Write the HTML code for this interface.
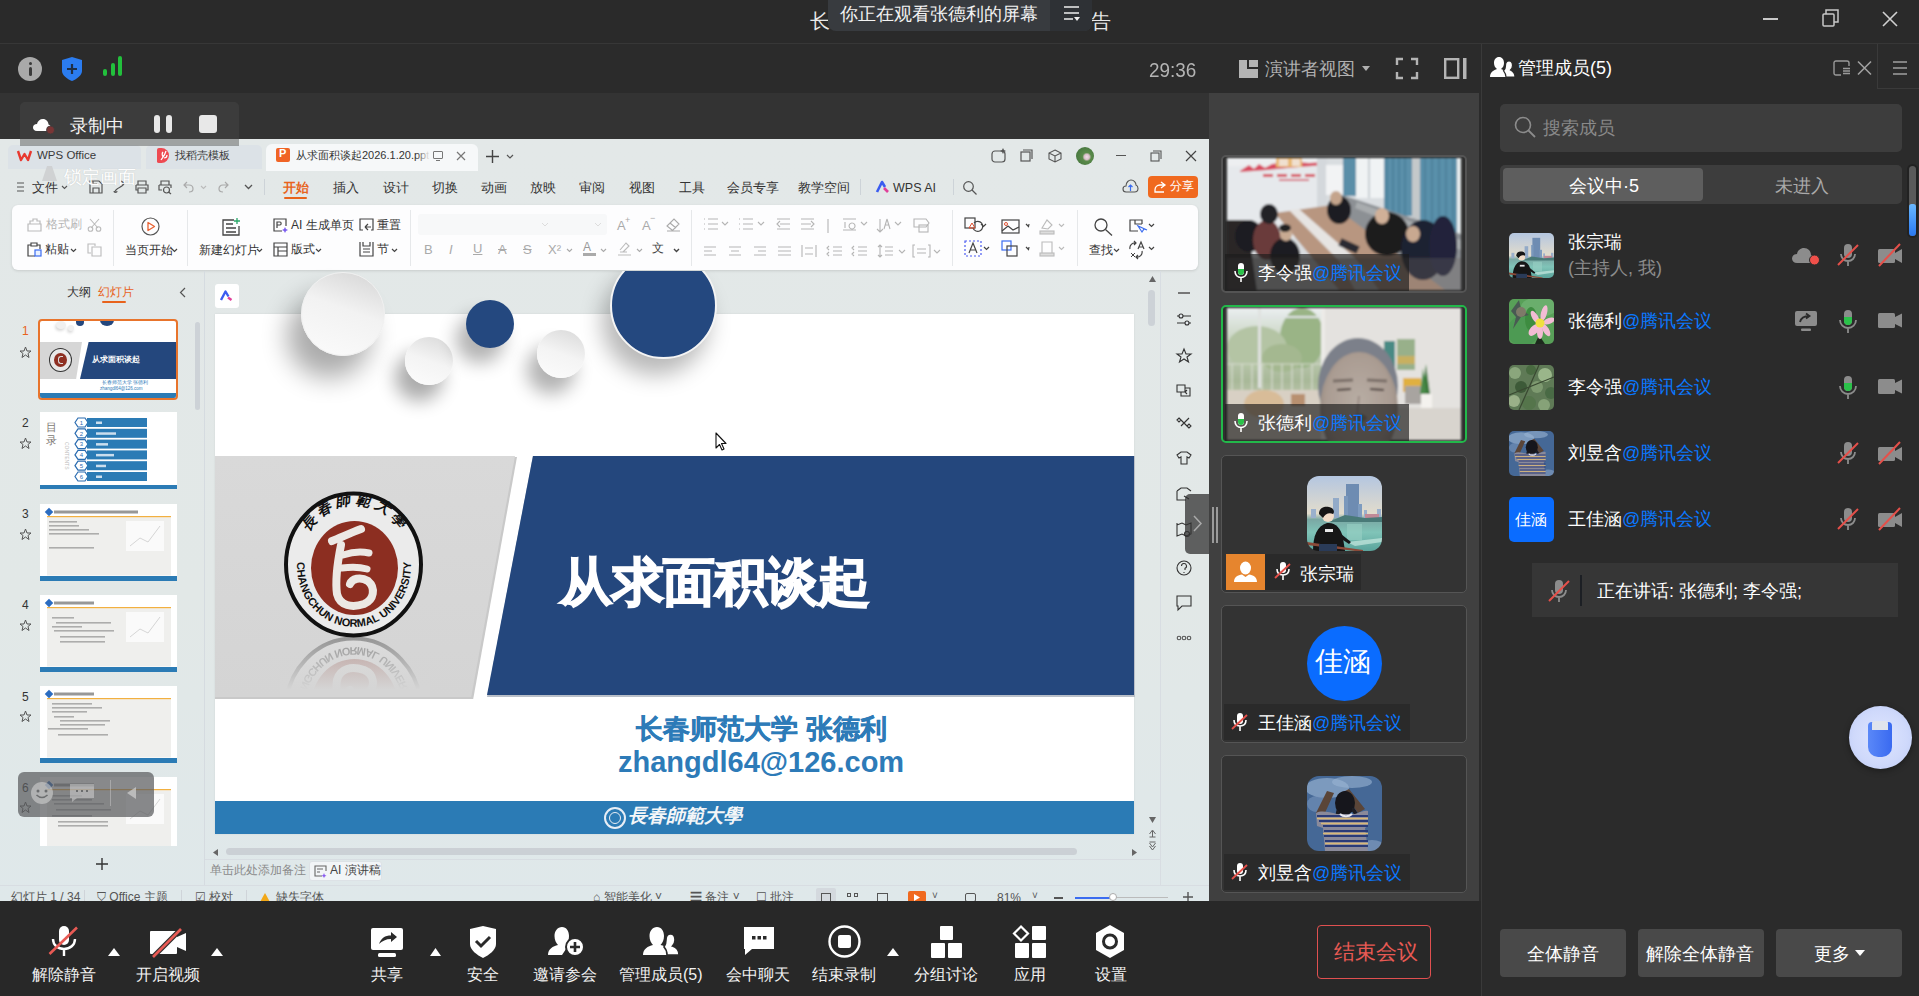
<!DOCTYPE html>
<html><head><meta charset="utf-8">
<style>
*{box-sizing:border-box;margin:0;padding:0}
html,body{width:1919px;height:996px;overflow:hidden;background:#2a2a2a;font-family:"Liberation Sans",sans-serif;color:#fff}
.a{position:absolute}
.t{position:absolute;white-space:nowrap;line-height:1}
svg{position:absolute;overflow:visible}
</style></head><body>
<svg width="0" height="0" style="position:absolute;left:0;top:0">
<defs>
<filter id="sblur"><feGaussianBlur stdDeviation="0.5"/></filter>
<linearGradient id="boySky" x1="0" y1="0" x2="0" y2="1"><stop offset="0" stop-color="#b4c6e0"/><stop offset="0.5" stop-color="#e2dccc"/><stop offset="0.58" stop-color="#7aa8a4"/><stop offset="0.75" stop-color="#80c4b8"/><stop offset="1" stop-color="#5aa49c"/></linearGradient>
<symbol id="boyAv" viewBox="0 0 75 75">
 <g filter="url(#sblur)">
 <rect width="75" height="75" fill="url(#boySky)"/>
 <rect x="39" y="8" width="13" height="34" fill="#6e8cb2"/><rect x="37" y="20" width="4" height="22" fill="#7a98bc"/><rect x="51" y="28" width="4" height="14" fill="#7e9cc0"/>
 <rect x="26" y="22" width="6" height="20" fill="#92aac8"/><rect x="4" y="33" width="5" height="9" fill="#9ab0cc"/><rect x="57" y="34" width="3" height="8" fill="#9ab0cc"/><rect x="70" y="33" width="4" height="9" fill="#9ab0cc"/>
 <rect x="58" y="38" width="14" height="6" fill="#c08a98"/>
 <path d="M26 44L38 39L58 42L75 41V46H22Z" fill="#4a7a78"/>
 <path d="M40 48H55V64H40Z" fill="#9ad0c4" opacity="0.6"/>
 <path d="M40 66L75 62V66L48 70Z" fill="#c8e8e0" opacity="0.7"/>
 <path d="M6 75C6 60 10 50 20 47C28 46 34 52 36 62L38 75Z" fill="#151518"/>
 <path d="M34 58L44 66L42 68L33 62Z" fill="#151518"/>
 <path d="M18 53h8v3h-8z" fill="#e8e8e8"/>
 <ellipse cx="21" cy="40" rx="6" ry="6" fill="#f2dcc8"/>
 <path d="M12 38C12 32 17 30 22 31C27 32 28 36 26 38C22 36 18 38 16 42Z" fill="#141416"/>
 <path d="M0 66L56 74V76L0 69Z" fill="#8a4a38"/>
 <rect x="12" y="68" width="18" height="7" fill="#2a3a58"/>
 </g>
</symbol>
<symbol id="girlAv" viewBox="0 0 75 75">
 <g filter="url(#sblur)">
 <rect width="75" height="75" fill="#456896"/>
 <ellipse cx="20" cy="12" rx="22" ry="10" fill="#8aa6c8" opacity="0.8"/>
 <ellipse cx="45" cy="6" rx="20" ry="6" fill="#9ab4d2" opacity="0.6"/>
 <ellipse cx="10" cy="28" rx="10" ry="8" fill="#7a96bc" opacity="0.6"/>
 <ellipse cx="65" cy="70" rx="12" ry="6" fill="#8aa4c4" opacity="0.6"/>
 <path d="M9 37L20 15L27 17L17 39Z" fill="#5a4438"/>
 <path d="M58 33L42 13L36 16L51 37Z" fill="#5a4438"/>
 <ellipse cx="38" cy="27" rx="10" ry="12" fill="#16161c"/>
 <path d="M30 32L26 50L30 50L33 36Z" fill="#1a1a20"/><path d="M46 30L54 42L51 44L44 34Z" fill="#1a1a20"/>
 <path d="M9 37C14 34 22 36 30 38L48 38C54 36 58 34 61 35L61 50L58 52L61 75H18L16 52L10 50Z" fill="#8a8a9a"/>
 <path d="M10 40H61M12 45H61M16 50H61M17 55H61M17 60H61M18 65H61M18 70H61" stroke="#2a3a78" stroke-width="2"/>
 <path d="M10 42.5H61M14 47.5H61M16 57.5H61M18 67.5H61" stroke="#d8b878" stroke-width="1.4"/>
 <path d="M33 38C36 41 42 41 45 38" stroke="#e8e8f0" stroke-width="2" fill="none"/>
 </g>
</symbol>
<symbol id="lilyAv" viewBox="0 0 45 45">
 <g filter="url(#sblur)">
 <rect width="45" height="45" fill="#58a058"/>
 <ellipse cx="14" cy="32" rx="16" ry="15" fill="#4e9a52"/>
 <ellipse cx="30" cy="8" rx="18" ry="10" fill="#6aae6c"/>
 <ellipse cx="22" cy="20" rx="6" ry="12" fill="#3e8c40"/>
 <path d="M2 12L10 1L12 10L20 16L12 18L4 30L7 18Z" fill="#4a5a52"/>
 <ellipse cx="12" cy="13" rx="5" ry="5" fill="#7e7a68"/>
 <path d="M30 36L36 45H26Z" fill="#1e2a1e"/>
 <g fill="#f2bcd4"><ellipse cx="26" cy="18" rx="3" ry="7" transform="rotate(-30 26 18)"/><ellipse cx="35" cy="14" rx="3" ry="8" transform="rotate(15 35 14)"/><ellipse cx="40" cy="22" rx="3" ry="6" transform="rotate(70 40 22)"/><ellipse cx="25" cy="31" rx="4" ry="7" transform="rotate(40 25 31)"/><ellipse cx="37" cy="31" rx="3" ry="7" transform="rotate(-30 37 31)"/><ellipse cx="31" cy="33" rx="3" ry="7"/></g>
 <circle cx="31" cy="24" r="4.5" fill="#f0e040"/>
 </g>
</symbol>
</defs></svg>

<!-- title bar -->
<div class="a" style="left:0;top:0;width:1919px;height:44px;background:#2a2a2a"></div>
<div class="a" style="left:0;top:43px;width:1919px;height:2px;background:#373737"></div>
<div class="t" style="left:810px;top:11px;font-size:20px;color:#e8e8e8">长</div>
<div class="t" style="left:1091px;top:11px;font-size:20px;color:#e8e8e8">告</div>
<div class="a" style="left:828px;top:0;width:264px;height:31px;background:#383b3f;border-radius:0 0 8px 8px"></div>
<div class="a" style="left:1050px;top:0;width:42px;height:31px;background:#2e3135;border-radius:0 0 8px 0"></div>
<div class="t" style="left:840px;top:5px;font-size:18px;color:#f2f2f2">你正在观看张德利的屏幕</div>

<!-- toolbar -->
<div class="a" style="left:0;top:44px;width:1919px;height:49px;background:#2b2b2b"></div>
<div class="t" style="left:1149px;top:59.5px;font-size:20.5px;color:#b4b4b4;transform:scaleX(0.92);transform-origin:0 0">29:36</div>
<div class="t" style="left:1265px;top:60px;font-size:18px;color:#b0b0b0">演讲者视图</div>

<!-- left dark strip below toolbar -->
<div class="a" style="left:0;top:93px;width:1209px;height:46px;background:#333"></div>
<!-- video column -->
<div class="a" style="left:1209px;top:93px;width:270px;height:808px;background:#404040"></div>
<div class="a" style="left:1479px;top:93px;width:2px;height:808px;background:#2b2b2b"></div>
<div class="a" style="left:1481px;top:44px;width:1px;height:952px;background:#3a3a3a"></div>
<!-- right panel -->
<div class="a" style="left:1482px;top:44px;width:437px;height:952px;background:#2b2b2b"></div>

<!-- WPS window -->
<div class="a" style="left:0;top:0;width:1209px;height:901px;overflow:hidden">
<div class="a" style="left:0;top:139px;width:1209px;height:762px;background:linear-gradient(180deg,#e3e8e8 0%,#e2e8e7 60%,#dfe8ea 100%)"></div>
<!-- tabs -->
<div class="a" style="left:8px;top:145px;width:133px;height:24px;background:#dce2e7;border-radius:5px 5px 0 0"></div>
<div class="a" style="left:146px;top:145px;width:116px;height:24px;background:#dce2e7;border-radius:5px 5px 0 0"></div>
<div class="a" style="left:266px;top:144px;width:212px;height:27px;background:#f6f8f9;border-radius:6px 6px 0 0"></div>
<svg style="left:17px;top:150px" width="15" height="11" viewBox="0 0 15 11"><path d="M1 1 L4 10 L7.5 4 L11 10 L14 1" fill="none" stroke="#e8382f" stroke-width="2.4" stroke-linejoin="round"/></svg>
<div class="t" style="left:37px;top:150px;font-size:11.5px;color:#3a3a3a">WPS Office</div>
<div class="a" style="left:157px;top:148px;width:12px;height:15px;background:#ee4a52;border-radius:2px 8px 8px 2px"></div><svg style="left:158px;top:150px" width="10" height="11"><path d="M3 10C5 7 7 5 8 1M5 7C4 5 4 3 5 2M6 8C8 8 9 7 9 5" fill="none" stroke="#fff" stroke-width="1.2"/></svg>
<div class="t" style="left:175px;top:150px;font-size:11px;color:#3a3a3a">找稻壳模板</div>
<div class="a" style="left:276px;top:148px;width:14px;height:14px;background:#f06425;border-radius:2px"></div>
<div class="t" style="left:279px;top:148px;font-size:11px;font-weight:bold;color:#fff">P</div>
<div class="t" style="left:296px;top:150px;font-size:11px;color:#333">从求面积谈起2026.1.20.ppt</div>
<div class="a" style="left:416px;top:146px;width:14px;height:20px;background:linear-gradient(90deg,rgba(246,248,249,0),#f6f8f9)"></div>
<div class="a" style="left:433px;top:151px;width:10px;height:8px;border:1.2px solid #777;border-radius:1px"></div>
<div class="a" style="left:436px;top:160px;width:4px;height:1px;background:#777"></div>
<svg style="left:456px;top:151px" width="10" height="10"><path d="M1 1L9 9M9 1L1 9" stroke="#777" stroke-width="1.2"/></svg>
<svg style="left:486px;top:150px" width="13" height="13"><path d="M6.5 0V13M0 6.5H13" stroke="#444" stroke-width="1.4"/></svg>
<svg style="left:506px;top:154px" width="8" height="5"><path d="M1 1L4 4L7 1" fill="none" stroke="#555" stroke-width="1.2"/></svg>
<!-- window controls -->
<svg style="left:991px;top:148px" width="16" height="15"><rect x="1" y="3" width="13" height="11" rx="3" fill="none" stroke="#555" stroke-width="1.2"/><path d="M12 0l1 2 2 1-2 1-1 2-1-2-2-1 2-1z" fill="#555"/></svg>
<svg style="left:1020px;top:149px" width="13" height="13"><rect x="1" y="3" width="9" height="9" fill="none" stroke="#555" stroke-width="1.2"/><path d="M3 1H12V10" fill="none" stroke="#555" stroke-width="1.2"/></svg>
<svg style="left:1048px;top:149px" width="14" height="14"><path d="M7 1L13 4V10L7 13L1 10V4Z M1 4L7 7L13 4 M7 7V13" fill="none" stroke="#555" stroke-width="1.1"/></svg>
<div class="a" style="left:1076px;top:147px;width:18px;height:18px;border-radius:50%;background:radial-gradient(circle at 60% 55%,#f0e0e8 0,#d9c0c8 18%,#5a8a4a 30%,#3e6e3a 100%)"></div>
<div class="a" style="left:1116px;top:155px;width:10px;height:1.3px;background:#555"></div>
<svg style="left:1150px;top:150px" width="12" height="12"><rect x="1" y="3" width="8" height="8" fill="none" stroke="#555" stroke-width="1.1"/><path d="M3 1H11V9" fill="none" stroke="#555" stroke-width="1.1"/></svg>
<svg style="left:1186px;top:151px" width="10" height="10"><path d="M0 0L10 10M10 0L0 10" stroke="#444" stroke-width="1.2"/></svg>

<!-- menu row -->
<svg style="left:17px;top:182px" width="7" height="10"><path d="M0 1H7M0 5H7M0 9H7" stroke="#555" stroke-width="1.1"/></svg>
<div class="t" style="left:32px;top:182px;font-size:12.5px;color:#333">文件</div>
<svg style="left:61px;top:185px" width="7" height="5"><path d="M1 1L3.5 3.5L6 1" fill="none" stroke="#555" stroke-width="1.1"/></svg>
<svg style="left:89px;top:180px" width="14" height="14"><path d="M1 1H10L13 4V13H1Z M4 13V8H10V13 M4 1V4H8" fill="none" stroke="#555" stroke-width="1.2"/></svg>
<svg style="left:113px;top:180px" width="13" height="14"><path d="M2 12 C2 8 11 7 11 3 M8 1 L11 3 L9 6 M1 11 a1.5 1.5 0 1 0 3 0" fill="none" stroke="#555" stroke-width="1.2"/></svg>
<svg style="left:135px;top:180px" width="14" height="14"><path d="M3 5V1H11V5 M1 5H13V10H11 M3 10H1V5 M3 8H11V13H3Z" fill="none" stroke="#555" stroke-width="1.2"/></svg>
<svg style="left:158px;top:180px" width="14" height="14"><path d="M3 5V1H11V5 M1 5H13V8 M1 5V10H4" fill="none" stroke="#555" stroke-width="1.2"/><circle cx="8.5" cy="10" r="3" fill="none" stroke="#555" stroke-width="1.2"/><path d="M10.5 12L13 14" stroke="#555" stroke-width="1.2"/></svg>
<svg style="left:183px;top:181px" width="11" height="12"><path d="M4 1L1 4L4 7 M1 4H6C9 4 10 6 10 8C10 10 8 11 6 11" fill="none" stroke="#aaa" stroke-width="1.2"/></svg>
<svg style="left:200px;top:185px" width="7" height="5"><path d="M1 1L3.5 3.5L6 1" fill="none" stroke="#bbb" stroke-width="1.1"/></svg>
<svg style="left:218px;top:181px" width="11" height="12"><path d="M7 1L10 4L7 7 M10 4H5C2 4 1 6 1 8C1 10 3 11 5 11" fill="none" stroke="#aaa" stroke-width="1.2"/></svg>
<svg style="left:244px;top:184px" width="9" height="6"><path d="M1 1L4.5 4.5L8 1" fill="none" stroke="#555" stroke-width="1.3"/></svg>
<div class="a" style="left:264px;top:179px;width:1px;height:16px;background:#cdd3d8"></div>
<div class="t" style="left:283px;top:182px;font-size:12.5px;color:#e8631c;font-weight:bold">开始</div>
<div class="a" style="left:284px;top:197px;width:23px;height:2px;background:#e8631c;border-radius:1px"></div>
<div class="t" style="left:333px;top:182px;font-size:12.5px;color:#333">插入</div>
<div class="t" style="left:383px;top:182px;font-size:12.5px;color:#333">设计</div>
<div class="t" style="left:432px;top:182px;font-size:12.5px;color:#333">切换</div>
<div class="t" style="left:481px;top:182px;font-size:12.5px;color:#333">动画</div>
<div class="t" style="left:530px;top:182px;font-size:12.5px;color:#333">放映</div>
<div class="t" style="left:579px;top:182px;font-size:12.5px;color:#333">审阅</div>
<div class="t" style="left:629px;top:182px;font-size:12.5px;color:#333">视图</div>
<div class="t" style="left:679px;top:182px;font-size:12.5px;color:#333">工具</div>
<div class="t" style="left:727px;top:182px;font-size:12.5px;color:#333">会员专享</div>
<div class="t" style="left:798px;top:182px;font-size:12.5px;color:#333">教学空间</div>
<div class="a" style="left:860px;top:179px;width:1px;height:16px;background:#cdd3d8"></div>
<svg style="left:876px;top:181px" width="15" height="12"><path d="M1 11L6 1L9 6" fill="none" stroke="#3b5cf0" stroke-width="2.6" stroke-linejoin="round"/><path d="M8 7L12 11" stroke="#e0409a" stroke-width="2.6"/></svg>
<div class="t" style="left:893px;top:182px;font-size:12.5px;color:#333">WPS AI</div>
<div class="a" style="left:953px;top:179px;width:1px;height:16px;background:#cdd3d8"></div>
<svg style="left:963px;top:181px" width="14" height="14"><circle cx="5.5" cy="5.5" r="4.8" fill="none" stroke="#555" stroke-width="1.2"/><path d="M9 9L13.5 13.5" stroke="#555" stroke-width="1.2"/></svg>
<svg style="left:1122px;top:179px" width="17" height="15"><path d="M4 13C1.5 13 1 11 1 10C1 8 2.5 7 4 7C4 3 7 1 9 1C12 1 14 3.5 14 6C15.5 6.5 16 8 16 9.5C16 11.5 14.5 13 12.5 13Z" fill="none" stroke="#555" stroke-width="1.1"/><path d="M8.5 12V6M6.5 8L8.5 6L10.5 8" fill="none" stroke="#3b6cf0" stroke-width="1.2"/></svg>
<div class="a" style="left:1148px;top:176px;width:50px;height:22px;background:#f0691f;border-radius:4px"></div>
<svg style="left:1154px;top:181px" width="12" height="12"><path d="M7 1L11 4L7 7 M11 4H6C3 4 1 6 1 9V11H10" fill="none" stroke="#fff" stroke-width="1.3"/></svg>
<div class="t" style="left:1170px;top:180px;font-size:12px;color:#fff">分享</div>

<!-- ribbon card -->
<div class="a" style="left:12px;top:205px;width:1186px;height:65px;background:#fdfdfe;border-radius:6px;box-shadow:0 1px 3px rgba(0,0,0,0.12)"></div>
<!-- ribbon content -->
<svg style="left:27px;top:218px" width="15" height="14"><path d="M3 6V3H6V1H10V3H13V6 M1 6H14V13H1Z" fill="none" stroke="#bbb" stroke-width="1.2"/></svg>
<div class="t" style="left:46px;top:219px;font-size:11.5px;color:#b5b5b5">格式刷</div>
<svg style="left:87px;top:218px" width="15" height="14"><path d="M3 1L11 10M12 1L4 10" fill="none" stroke="#bbb" stroke-width="1.1"/><circle cx="3.5" cy="11" r="2.3" fill="none" stroke="#bbb" stroke-width="1.1"/><circle cx="11.5" cy="11" r="2.3" fill="none" stroke="#bbb" stroke-width="1.1"/></svg>
<svg style="left:27px;top:242px" width="15" height="15"><path d="M4 3H1V14H8 M10 3H13V7 M4 1H10V4H4Z" fill="none" stroke="#444" stroke-width="1.2"/><rect x="8" y="8" width="6" height="6" fill="#e8f0ff" stroke="#3b6cf0" stroke-width="1.2"/></svg>
<div class="t" style="left:45px;top:243px;font-size:12px;color:#333">粘贴</div>
<svg style="left:70px;top:248px" width="7" height="5"><path d="M1 1L3.5 3.5L6 1" fill="none" stroke="#444" stroke-width="1.2"/></svg>
<svg style="left:87px;top:243px" width="15" height="14"><path d="M4 10H1V1H8V3 M5 4H14V13H5Z" fill="none" stroke="#bbb" stroke-width="1.1"/></svg>
<div class="a" style="left:113px;top:210px;width:1px;height:56px;background:#e6e8ea"></div>
<svg style="left:141px;top:217px" width="19" height="19"><circle cx="9.5" cy="9.5" r="8.5" fill="none" stroke="#555" stroke-width="1.2"/><path d="M7 5.5V13.5L13.5 9.5Z" fill="none" stroke="#e86030" stroke-width="1.3" stroke-linejoin="round"/></svg>
<div class="t" style="left:125px;top:244px;font-size:12px;color:#333">当页开始</div>
<svg style="left:171px;top:248px" width="7" height="5"><path d="M1 1L3.5 3.5L6 1" fill="none" stroke="#444" stroke-width="1.2"/></svg>
<div class="a" style="left:187px;top:210px;width:1px;height:56px;background:#e6e8ea"></div>
<svg style="left:222px;top:217px" width="19" height="19"><path d="M12 3H1V18H17V9 M4 7H11M4 11H14M4 15H14" fill="none" stroke="#444" stroke-width="1.3"/><path d="M15 1V7M12 4H18" stroke="#2aa86a" stroke-width="1.3"/></svg>
<div class="t" style="left:199px;top:244px;font-size:12px;color:#333">新建幻灯片</div>
<svg style="left:256px;top:248px" width="7" height="5"><path d="M1 1L3.5 3.5L6 1" fill="none" stroke="#444" stroke-width="1.2"/></svg>
<svg style="left:273px;top:218px" width="15" height="15"><path d="M9 13H1V1H13V8" fill="none" stroke="#444" stroke-width="1.2"/><path d="M4 10V4H7C8.5 4 8.5 7 7 7H4" fill="none" stroke="#444" stroke-width="1.2"/><path d="M12 9L13 11L15 12L13 13L12 15L11 13L9 12L11 11Z" fill="#7b5cf0"/></svg>
<div class="t" style="left:291px;top:219px;font-size:12px;color:#333">AI 生成单页</div>
<svg style="left:273px;top:242px" width="15" height="15"><path d="M1 1H14V14H1Z M1 5H14 M5 5V14 M5 9H14" fill="none" stroke="#444" stroke-width="1.2"/></svg>
<div class="t" style="left:291px;top:243px;font-size:12px;color:#333">版式</div>
<svg style="left:315px;top:248px" width="7" height="5"><path d="M1 1L3.5 3.5L6 1" fill="none" stroke="#444" stroke-width="1.2"/></svg>
<svg style="left:359px;top:218px" width="15" height="15"><path d="M4 12H1V1H14V12H12 M6 9L9 6 M6 9L9 12 M6 9H12" fill="none" stroke="#444" stroke-width="1.2"/></svg>
<div class="t" style="left:377px;top:219px;font-size:12px;color:#333">重置</div>
<svg style="left:359px;top:241px" width="15" height="16"><path d="M1 1V15H14V1 M4 1V5H11V1 M4 8H11M4 11H11" fill="none" stroke="#444" stroke-width="1.2"/></svg>
<div class="t" style="left:377px;top:243px;font-size:12px;color:#333">节</div>
<svg style="left:391px;top:248px" width="7" height="5"><path d="M1 1L3.5 3.5L6 1" fill="none" stroke="#444" stroke-width="1.2"/></svg>
<div class="a" style="left:410px;top:210px;width:1px;height:56px;background:#e6e8ea"></div>
<div class="a" style="left:418px;top:214px;width:189px;height:21px;background:#f7f8f9;border-radius:3px"></div>
<svg style="left:541px;top:222px" width="8" height="5"><path d="M1 1L4 4L7 1" fill="none" stroke="#ddd" stroke-width="1"/></svg>
<svg style="left:594px;top:222px" width="8" height="5"><path d="M1 1L4 4L7 1" fill="none" stroke="#ddd" stroke-width="1"/></svg>
<div class="t" style="left:617px;top:219px;font-size:13px;color:#aaa">A</div><div class="t" style="left:625px;top:216px;font-size:9px;color:#aaa">+</div>
<div class="t" style="left:642px;top:219px;font-size:13px;color:#aaa">A</div><div class="t" style="left:650px;top:214px;font-size:9px;color:#aaa">−</div>
<svg style="left:666px;top:218px" width="15" height="14"><path d="M6 12L1 8L8 1L13 6L7 12Z M4 5L10 10 M1 13H14" fill="none" stroke="#aaa" stroke-width="1.1"/></svg>
<div class="t" style="left:424px;top:243px;font-size:13px;color:#aaa">B</div>
<div class="t" style="left:449px;top:243px;font-size:13px;color:#aaa;font-style:italic">I</div>
<div class="t" style="left:473px;top:242px;font-size:13px;color:#aaa;text-decoration:underline">U</div>
<div class="t" style="left:498px;top:243px;font-size:13px;color:#aaa;text-decoration:line-through">A</div>
<div class="t" style="left:523px;top:243px;font-size:13px;color:#aaa;text-decoration:line-through">S</div>
<div class="t" style="left:548px;top:243px;font-size:13px;color:#aaa">X²</div>
<svg style="left:566px;top:248px" width="7" height="5"><path d="M1 1L3.5 3.5L6 1" fill="none" stroke="#aaa" stroke-width="1.1"/></svg>
<div class="t" style="left:583px;top:241px;font-size:12px;color:#999">A</div>
<div class="a" style="left:583px;top:253px;width:13px;height:3px;background:#aaa"></div>
<svg style="left:600px;top:248px" width="7" height="5"><path d="M1 1L3.5 3.5L6 1" fill="none" stroke="#aaa" stroke-width="1.1"/></svg>
<svg style="left:618px;top:241px" width="13" height="15"><path d="M2 9L8 2L11 5L5 11 M2 11H9" fill="none" stroke="#bbb" stroke-width="1.1"/><rect x="0" y="13" width="13" height="2" fill="#ddd"/></svg>
<svg style="left:636px;top:248px" width="7" height="5"><path d="M1 1L3.5 3.5L6 1" fill="none" stroke="#aaa" stroke-width="1.1"/></svg>
<div class="t" style="left:652px;top:242px;font-size:12px;color:#444">文</div>
<svg style="left:673px;top:248px" width="7" height="5"><path d="M1 1L3.5 3.5L6 1" fill="none" stroke="#444" stroke-width="1.4"/></svg>
<div class="a" style="left:691px;top:210px;width:1px;height:56px;background:#e6e8ea"></div>
<!-- paragraph group (grey icons) -->
<svg style="left:704px;top:218px" width="240" height="42">
<g fill="none" stroke="#b5b5b5" stroke-width="1.1">
<path d="M0 1h1M0 6h1M0 11h1M4 1h10M4 6h10M4 11h10"/><path d="M18 4l3 3 3-3"/>
<path d="M35 1h1M35 6h1M35 11h1M39 1h10M39 6h10M39 11h10"/><path d="M54 4l3 3 3-3"/>
<path d="M73 1h13M76 6h10M73 11h13M76 3l-3 3 3 3"/>
<path d="M97 1h13M97 6h10M97 11h13M107 3l3 3-3 3"/>
<path d="M124 1v14"/>
<path d="M139 1h13M139 12h13M141 4v6M148 5a3 3 0 1 0 0.1 0"/><path d="M157 4l3 3 3-3"/>
<path d="M176 1v13M173 11l3 3 3-3M183 1l-3 10M183 1l3 10M181 7h4"/><path d="M191 4l3 3 3-3"/>
<path d="M210 1h12l3 4-3 4h-12z"/><rect x="215" y="7" width="9" height="7"/>
<path d="M0 29h12M0 33h8M0 37h12"/>
<path d="M25 29h12M27 33h8M25 37h12"/>
<path d="M50 29h12M54 33h8M50 37h12"/>
<path d="M74 29h13M74 33h13M74 37h13"/>
<path d="M98 27v12M112 27v12M101 30h8M101 36h8"/>
<path d="M125 28l-2 2 2 2M125 38l-2-2 2-2M129 29h9M129 33h9M129 37h9"/>
<path d="M150 28l-2 2 2 2M150 38l-2-2 2-2M154 29h9M154 33h9M154 37h9"/>
<path d="M176 27v12M174 29l2-2 2 2M174 37l2 2 2-2M181 29h8M181 33h8M181 37h8"/><path d="M195 32l3 3 3-3"/>
<path d="M211 27h-2v12h2M224 27h2v12h-2M213 31h9M213 35h9"/><path d="M230 32l3 3 3-3"/>
</g></svg>
<div class="a" style="left:952px;top:210px;width:1px;height:56px;background:#e6e8ea"></div>
<svg style="left:964px;top:217px" width="105" height="42">
<g fill="none" stroke="#444" stroke-width="1.2">
<rect x="1" y="1" width="10" height="10"/><path d="M9 11a5 5 0 1 0 1-5"/><path d="M17 7l2.5 2.5L22 7"/>
<rect x="38" y="3" width="17" height="13"/><path d="M38 14l6-5 5 4 6-3"/><path d="M62 7l2.5 2.5L65 7"/>
</g>
<path d="M5 11l3-5 3 5z" fill="none" stroke="#e05030" stroke-width="1"/>
<circle cx="42" cy="7" r="1.5" fill="none" stroke="#e05030"/>
<g fill="none" stroke="#bbb" stroke-width="1.1"><path d="M78 11l5-8 5 5-4 4z"/><rect x="76" y="14" width="14" height="3" fill="#ddd"/><path d="M95 7l2.5 2.5L100 7"/></g>
<g fill="none" stroke="#444" stroke-width="1.2"><rect x="1" y="24" width="16" height="15" stroke-dasharray="2 2" stroke="#4a5af0"/><path d="M5 36l4-10 4 10M6.5 33h5"/><path d="M20 30l2.5 2.5L25 30"/>
<rect x="38" y="24" width="9" height="9" stroke="#3b6cf0"/><rect x="43" y="29" width="10" height="10"/><path d="M62 30l2.5 2.5L65 30"/></g>
<g fill="none" stroke="#bbb" stroke-width="1.1"><path d="M78 36V25h10v11"/><rect x="76" y="36" width="14" height="3" fill="#ddd"/><path d="M95 30l2.5 2.5L100 30"/></g>
</svg>
<div class="a" style="left:1077px;top:210px;width:1px;height:56px;background:#e6e8ea"></div>
<svg style="left:1094px;top:218px" width="19" height="18"><circle cx="7" cy="7" r="6" fill="none" stroke="#444" stroke-width="1.3"/><path d="M11.5 11.5L18 17.5" stroke="#444" stroke-width="1.3"/></svg>
<div class="t" style="left:1089px;top:244px;font-size:12px;color:#333">查找</div>
<svg style="left:1113px;top:248px" width="7" height="5"><path d="M1 1L3.5 3.5L6 1" fill="none" stroke="#444" stroke-width="1.2"/></svg>
<svg style="left:1129px;top:218px" width="28" height="40"><g fill="none" stroke="#444" stroke-width="1.2"><path d="M9 13H1V2H13V6 M6 2V6H13"/><path d="M9 8l4 6 2-3 3 1z" stroke="#3b6cf0"/><path d="M20 6l2.5 2.5L25 6"/><path d="M1 31a5 5 0 0 1 6-6M13 33a5 5 0 0 1-6 6M5 23l2 2-2 2M9 37l-2 2 2 2"/><path d="M9 31l3-7 3 7M10 29h4"/><path d="M2 35l4 4M6 35l-4 4" stroke-width="1"/><path d="M20 29l2.5 2.5L25 29"/></g></svg>
<!-- left pane -->
<div class="a" style="left:204px;top:271px;width:1px;height:614px;background:#d5dbe0"></div>
<div class="t" style="left:67px;top:286px;font-size:12px;color:#333">大纲</div>
<div class="t" style="left:98px;top:286px;font-size:12px;color:#e8631c">幻灯片</div>
<div class="a" style="left:102px;top:301px;width:24px;height:2px;background:#e8631c;border-radius:1px"></div>
<svg style="left:179px;top:287px" width="7" height="11"><path d="M6 1L1.5 5.5L6 10" fill="none" stroke="#555" stroke-width="1.2"/></svg>
<div class="a" style="left:195px;top:322px;width:5px;height:88px;background:#cdd2d7;border-radius:3px"></div>
<!-- slide numbers -->
<div class="t" style="left:22px;top:325px;font-size:12px;color:#e8631c">1</div>
<div class="t" style="left:22px;top:417px;font-size:12px;color:#333">2</div>
<div class="t" style="left:22px;top:508px;font-size:12px;color:#333">3</div>
<div class="t" style="left:22px;top:599px;font-size:12px;color:#333">4</div>
<div class="t" style="left:22px;top:691px;font-size:12px;color:#333">5</div>
<div class="t" style="left:22px;top:782px;font-size:12px;color:#333">6</div>
<svg style="left:19px;top:346px" width="13" height="13"><path id="star" d="M6.5 1L8 5H12L9 7.5L10 11.5L6.5 9L3 11.5L4 7.5L1 5H5Z" fill="none" stroke="#555" stroke-width="1"/></svg>
<svg style="left:19px;top:437px" width="13" height="13"><path d="M6.5 1L8 5H12L9 7.5L10 11.5L6.5 9L3 11.5L4 7.5L1 5H5Z" fill="none" stroke="#555" stroke-width="1"/></svg>
<svg style="left:19px;top:528px" width="13" height="13"><path d="M6.5 1L8 5H12L9 7.5L10 11.5L6.5 9L3 11.5L4 7.5L1 5H5Z" fill="none" stroke="#555" stroke-width="1"/></svg>
<svg style="left:19px;top:619px" width="13" height="13"><path d="M6.5 1L8 5H12L9 7.5L10 11.5L6.5 9L3 11.5L4 7.5L1 5H5Z" fill="none" stroke="#555" stroke-width="1"/></svg>
<svg style="left:19px;top:710px" width="13" height="13"><path d="M6.5 1L8 5H12L9 7.5L10 11.5L6.5 9L3 11.5L4 7.5L1 5H5Z" fill="none" stroke="#555" stroke-width="1"/></svg>
<svg style="left:19px;top:801px" width="13" height="13"><path d="M6.5 1L8 5H12L9 7.5L10 11.5L6.5 9L3 11.5L4 7.5L1 5H5Z" fill="none" stroke="#555" stroke-width="1"/></svg>
<!-- thumb 1 -->
<div class="a" style="left:38px;top:319px;width:140px;height:81px;border:2px solid #e8742c;border-radius:4px;background:#fff;overflow:hidden">
  <div class="a" style="left:36px;top:-3px;width:8px;height:8px;border-radius:50%;background:#24477d"></div>
  <div class="a" style="left:60px;top:-7px;width:14px;height:12px;border-radius:50%;background:#24477d"></div>
  <div class="a" style="left:16px;top:0;width:10px;height:8px;border-radius:50%;background:#f0f0f0;box-shadow:-1px 2px 3px rgba(0,0,0,0.15)"></div>
  <div class="a" style="left:28px;top:4px;width:6px;height:6px;border-radius:50%;background:#f0f0f0;box-shadow:-1px 2px 3px rgba(0,0,0,0.15)"></div>
  <div class="a" style="left:0;top:21px;width:42px;height:37px;background:#d6d6d6;clip-path:polygon(0 0,100% 0,86% 100%,0 100%)"></div>
  <div class="a" style="left:40px;top:21px;width:96px;height:37px;background:#24477d;clip-path:polygon(9% 0,100% 0,100% 100%,0 100%)"></div>
  <div class="a" style="left:9px;top:27px;width:23px;height:24px;border-radius:50%;border:1.5px solid #333;background:#e8e8e8"></div>
  <div class="a" style="left:14px;top:32px;width:13px;height:14px;border-radius:50%;background:#8e2f22"></div>
  <div class="a" style="left:18px;top:35px;width:5px;height:8px;border:1.5px solid #ddd;border-right:none;border-radius:3px 0 0 3px"></div>
  <div class="t" style="left:52px;top:35px;font-size:7.5px;font-weight:bold;color:#fff">从求面积谈起</div>
  <div class="t" style="left:62px;top:60px;font-size:4.5px;color:#2d7bb8">长春师范大学 张德利</div>
  <div class="t" style="left:60px;top:66px;font-size:4.5px;color:#2d7bb8">zhangdl64@126.com</div>
  <div class="a" style="left:0;top:72px;width:136px;height:5px;background:#2b7bb5"></div>
</div>
<!-- thumb 2 -->
<div class="a" style="left:40px;top:412px;width:137px;height:77px;background:#fff;overflow:hidden"><svg style="left:0;top:0" width="137" height="77">
<text x="6" y="19" font-size="11" fill="#807a74" font-family="Liberation Serif">目</text><text x="6" y="32" font-size="11" fill="#807a74" font-family="Liberation Serif">录</text>
<text x="0" y="0" font-size="5" fill="#bbb" font-family="Liberation Sans" transform="translate(25 30) rotate(90)">CONTENTS</text>
<path d="M35 10.5 l3 -4.5 h7 l3 4.5 l-3 4.5 h-7z" fill="#fff" stroke="#2b6cb0" stroke-width="1.2"/><rect x="47" y="6.0" width="60" height="9" fill="#2b7bb5"/><rect x="56" y="9.5" width="6" height="2.5" fill="#e8f0f8" opacity="0.85"/><text x="41.5" y="12.7" font-size="6" fill="#2b6cb0" text-anchor="middle" font-family="Liberation Sans">1</text><path d="M35 21.3 l3 -4.5 h7 l3 4.5 l-3 4.5 h-7z" fill="#fff" stroke="#2b6cb0" stroke-width="1.2"/><rect x="47" y="16.8" width="60" height="9" fill="#2b7bb5"/><rect x="56" y="20.3" width="20" height="2.5" fill="#e8f0f8" opacity="0.85"/><text x="41.5" y="23.5" font-size="6" fill="#2b6cb0" text-anchor="middle" font-family="Liberation Sans">2</text><path d="M35 32.1 l3 -4.5 h7 l3 4.5 l-3 4.5 h-7z" fill="#fff" stroke="#2b6cb0" stroke-width="1.2"/><rect x="47" y="27.6" width="60" height="9" fill="#2b7bb5"/><rect x="56" y="31.1" width="12" height="2.5" fill="#e8f0f8" opacity="0.85"/><text x="41.5" y="34.3" font-size="6" fill="#2b6cb0" text-anchor="middle" font-family="Liberation Sans">3</text><path d="M35 42.9 l3 -4.5 h7 l3 4.5 l-3 4.5 h-7z" fill="#fff" stroke="#2b6cb0" stroke-width="1.2"/><rect x="47" y="38.4" width="60" height="9" fill="#2b7bb5"/><rect x="56" y="41.9" width="18" height="2.5" fill="#e8f0f8" opacity="0.85"/><text x="41.5" y="45.1" font-size="6" fill="#2b6cb0" text-anchor="middle" font-family="Liberation Sans">4</text><path d="M35 53.7 l3 -4.5 h7 l3 4.5 l-3 4.5 h-7z" fill="#fff" stroke="#2b6cb0" stroke-width="1.2"/><rect x="47" y="49.2" width="60" height="9" fill="#2b7bb5"/><rect x="56" y="52.7" width="10" height="2.5" fill="#e8f0f8" opacity="0.85"/><text x="41.5" y="55.9" font-size="6" fill="#2b6cb0" text-anchor="middle" font-family="Liberation Sans">5</text><path d="M35 64.5 l3 -4.5 h7 l3 4.5 l-3 4.5 h-7z" fill="#fff" stroke="#2b6cb0" stroke-width="1.2"/><rect x="47" y="60.0" width="60" height="9" fill="#2b7bb5"/><rect x="56" y="63.5" width="6" height="2.5" fill="#e8f0f8" opacity="0.85"/><text x="41.5" y="66.7" font-size="6" fill="#2b6cb0" text-anchor="middle" font-family="Liberation Sans">6</text><rect x="0" y="73" width="137" height="4" fill="#2b7bb5"/></svg></div>
<div class="a" style="left:40px;top:504px;width:137px;height:77px;background:#fff;overflow:hidden"><svg style="left:0;top:0" width="137" height="77"><rect x="6" y="5" width="6" height="6" fill="#2b6cc0" transform="rotate(45 9 8)"/><rect x="14" y="6.5" width="84" height="3" fill="#444" opacity="0.55"/><rect x="7" y="12" width="124" height="1.5" fill="#f2b040"/><rect x="7" y="13.5" width="124" height="58" fill="#efefed"/><rect x="9" y="17" width="28" height="1.6" fill="#777" opacity="0.55"/><rect x="9" y="21" width="30" height="1.6" fill="#777" opacity="0.55"/><rect x="9" y="25" width="40" height="1.6" fill="#777" opacity="0.55"/><rect x="9" y="29" width="50" height="1.6" fill="#777" opacity="0.55"/><rect x="9" y="43" width="45" height="1.6" fill="#777" opacity="0.55"/><rect x="86" y="17" width="38" height="30" fill="#fafafa"/><path d="M90 42 L100 34 L108 38 L120 22" fill="none" stroke="#ccc" stroke-width="0.8"/><rect x="0" y="72" width="137" height="5" fill="#2b7bb5"/></svg></div>
<div class="a" style="left:40px;top:595px;width:137px;height:77px;background:#fff;overflow:hidden"><svg style="left:0;top:0" width="137" height="77"><rect x="6" y="5" width="6" height="6" fill="#2b6cc0" transform="rotate(45 9 8)"/><rect x="14" y="6.5" width="40" height="3" fill="#444" opacity="0.55"/><rect x="7" y="12" width="124" height="1.5" fill="#f2b040"/><rect x="7" y="13.5" width="124" height="58" fill="#efefed"/><rect x="12" y="22" width="22" height="1.6" fill="#777" opacity="0.55"/><rect x="16" y="27" width="55" height="1.6" fill="#777" opacity="0.55"/><rect x="12" y="31" width="30" height="1.6" fill="#777" opacity="0.55"/><rect x="14" y="35" width="60" height="1.6" fill="#777" opacity="0.55"/><rect x="20" y="41" width="45" height="1.6" fill="#777" opacity="0.55"/><rect x="20" y="46" width="45" height="1.6" fill="#777" opacity="0.55"/><rect x="86" y="17" width="38" height="30" fill="#fafafa"/><path d="M90 42 L100 34 L108 38 L120 22" fill="none" stroke="#ccc" stroke-width="0.8"/><rect x="0" y="72" width="137" height="5" fill="#2b7bb5"/></svg></div>
<div class="a" style="left:40px;top:686px;width:137px;height:77px;background:#fff;overflow:hidden"><svg style="left:0;top:0" width="137" height="77"><rect x="6" y="5" width="6" height="6" fill="#2b6cc0" transform="rotate(45 9 8)"/><rect x="14" y="6.5" width="40" height="3" fill="#444" opacity="0.55"/><rect x="7" y="12" width="124" height="1.5" fill="#f2b040"/><rect x="7" y="13.5" width="124" height="58" fill="#efefed"/><rect x="12" y="17" width="40" height="1.6" fill="#777" opacity="0.55"/><rect x="12" y="21" width="50" height="1.6" fill="#777" opacity="0.55"/><rect x="12" y="25" width="35" height="1.6" fill="#777" opacity="0.55"/><rect x="14" y="30" width="20" height="1.6" fill="#777" opacity="0.55"/><rect x="20" y="34" width="50" height="1.6" fill="#777" opacity="0.55"/><rect x="20" y="38" width="45" height="1.6" fill="#777" opacity="0.55"/><rect x="8" y="42" width="40" height="1.6" fill="#777" opacity="0.55"/><rect x="18" y="48" width="50" height="1.6" fill="#777" opacity="0.55"/><rect x="0" y="72" width="137" height="5" fill="#2b7bb5"/></svg></div>
<div class="a" style="left:40px;top:777px;width:137px;height:69px;background:#fff;overflow:hidden"><svg style="left:0;top:0" width="137" height="77"><rect x="6" y="5" width="6" height="6" fill="#2b6cc0" transform="rotate(45 9 8)"/><rect x="14" y="6.5" width="40" height="3" fill="#444" opacity="0.55"/><rect x="7" y="12" width="124" height="1.5" fill="#f2b040"/><rect x="7" y="13.5" width="124" height="58" fill="#efefed"/><rect x="12" y="18" width="30" height="1.6" fill="#777" opacity="0.55"/><rect x="12" y="22" width="40" height="1.6" fill="#777" opacity="0.55"/><rect x="14" y="26" width="50" height="1.6" fill="#777" opacity="0.55"/><rect x="16" y="32" width="55" height="1.6" fill="#777" opacity="0.55"/><rect x="12" y="38" width="40" height="1.6" fill="#777" opacity="0.55"/><rect x="18" y="44" width="50" height="1.6" fill="#777" opacity="0.55"/><rect x="18" y="48" width="50" height="1.6" fill="#777" opacity="0.55"/><rect x="86" y="17" width="38" height="30" fill="#fafafa"/><path d="M90 42 L100 34 L108 38 L120 22" fill="none" stroke="#ccc" stroke-width="0.8"/><rect x="0" y="72" width="137" height="5" fill="#2b7bb5"/></svg></div>
<svg style="left:96px;top:858px" width="12" height="12"><path d="M6 0V12M0 6H12" stroke="#333" stroke-width="1.4"/></svg>
<!-- annotation overlay on thumb pane -->
<div class="a" style="left:18px;top:772px;width:136px;height:45px;background:rgba(90,92,94,0.72);border-radius:6px"></div>
<svg style="left:30px;top:781px" width="24" height="24"><circle cx="12" cy="12" r="11" fill="rgba(215,215,215,0.55)"/><circle cx="8" cy="10" r="1.5" fill="rgba(90,92,94,0.8)"/><circle cx="16" cy="10" r="1.5" fill="rgba(90,92,94,0.8)"/><path d="M6.5 14Q12 19 17.5 14" fill="none" stroke="rgba(90,92,94,0.8)" stroke-width="1.6"/></svg>
<svg style="left:69px;top:783px" width="26" height="20"><path d="M1 1H25V15H8L3 19V15H1Z" fill="rgba(215,215,215,0.5)"/><path d="M7 8h2M12 8h2M17 8h2" stroke="rgba(90,92,94,0.8)" stroke-width="2"/></svg>
<div class="a" style="left:110px;top:780px;width:1px;height:26px;background:rgba(200,200,200,0.5)"></div>
<svg style="left:127px;top:787px" width="10" height="12"><path d="M9 0V12L0 6Z" fill="rgba(210,210,210,0.7)"/></svg>

<!-- canvas -->
<div class="a" style="left:215px;top:284px;width:24px;height:24px;background:#fff;border-radius:3px"></div>
<svg style="left:220px;top:290px" width="14" height="11"><path d="M1 10L5.5 1.5L8.5 6.5" fill="none" stroke="#3b5cf0" stroke-width="2.4" stroke-linejoin="round"/><path d="M8 7.5L11.5 10" stroke="#e0409a" stroke-width="2.4"/></svg>
<!-- slide -->
<div class="a" style="left:215px;top:314px;width:919px;height:520px;background:#fff;box-shadow:0 0 2px rgba(0,0,0,0.08)"></div>
<!-- circles -->
<div class="a" style="left:301px;top:272px;width:84px;height:84px;border-radius:50%;background:linear-gradient(200deg,#d4d4d4 0%,#f2f2f2 45%,#fbfbfb 100%);box-shadow:-14px 22px 26px rgba(0,0,0,0.33);border:1px solid #f0f0f0"></div>
<div class="a" style="left:405px;top:337px;width:48px;height:48px;border-radius:50%;background:linear-gradient(200deg,#d8d8d8 0%,#f4f4f4 50%,#fcfcfc 100%);box-shadow:-10px 16px 18px rgba(0,0,0,0.33)"></div>
<div class="a" style="left:466px;top:300px;width:48px;height:48px;border-radius:50%;background:#24487f;box-shadow:-10px 15px 18px rgba(0,0,0,0.3)"></div>
<div class="a" style="left:537px;top:330px;width:48px;height:48px;border-radius:50%;background:linear-gradient(200deg,#d8d8d8 0%,#f4f4f4 50%,#fcfcfc 100%);box-shadow:-10px 16px 18px rgba(0,0,0,0.3)"></div>
<div class="a" style="left:610px;top:252px;width:107px;height:107px;border-radius:50%;background:#24487f;border:2px solid #f4f4f4;box-shadow:-8px 16px 22px rgba(0,0,0,0.28);clip-path:inset(19px -60px -60px -60px)"></div>
<!-- gray slab & blue band -->
<div class="a" style="left:215px;top:457px;width:302px;height:242px;background:#c9c9c9;clip-path:polygon(0 0,100% 0,85.5% 100%,0 100%)"></div>
<div class="a" style="left:215px;top:456px;width:300px;height:241px;background:linear-gradient(180deg,#d9d9d9,#d4d4d4);clip-path:polygon(0 0,100% 0,85.4% 100%,0 100%)"></div>
<div class="a" style="left:487px;top:456px;width:648px;height:241px;background:#b9bfc8;clip-path:polygon(7.1% 0,100% 0,100% 100%,0 100%)"></div>
<div class="a" style="left:487px;top:456px;width:647px;height:239px;background:#24477d;clip-path:polygon(7.1% 0,100% 0,100% 100%,0 100%)"></div>
<div class="t" style="left:560px;top:556px;font-size:52px;font-weight:bold;color:#fff;letter-spacing:-0.5px;-webkit-text-stroke:1.6px #fff">从求面积谈起</div>
<!-- logo -->
<svg style="left:280px;top:488px" width="150" height="210" viewBox="0 0 150 210">
  <defs>
    <path id="arcB" d="M20.4 57.1 A 57 61 0 1 0 127.6 57.1"/>
    <path id="arcT" d="M22 62 A 54 56 0 0 1 128 62"/>
    <linearGradient id="refl" x1="0" y1="0" x2="0" y2="1"><stop offset="0" stop-color="#d5d5d5" stop-opacity="0"/><stop offset="0.85" stop-color="#d5d5d5" stop-opacity="1"/></linearGradient>
    <clipPath id="slabclip"><rect x="0" y="149" width="150" height="60"/></clipPath>
    <g id="logoG">
      <ellipse cx="73.5" cy="76.5" rx="67.5" ry="71" fill="#ebebeb" stroke="#111" stroke-width="4"/>
      <ellipse cx="74.5" cy="80" rx="43.5" ry="47" fill="#8c2e21"/>
      <g fill="none" stroke="#ece8e4" stroke-linecap="round" stroke-linejoin="round">
        <path d="M52 53 C60 50 70 45 81 41" stroke-width="8"/>
        <path d="M61 57 C58 72 55 92 57 106 C60 118 72 120 84 116 C94 112 96 100 88 93 C80 88 72 91 70 96" stroke-width="8"/>
        <path d="M63 67 C72 64 80 63 89 65" stroke-width="7"/>
        <path d="M62 80 C70 79 80 79 87 81" stroke-width="7"/>
      </g>
      <text font-family="Liberation Sans" font-weight="bold" font-size="11" fill="#111" letter-spacing="0"><textPath href="#arcB" startOffset="50%" text-anchor="middle">CHANGCHUN NORMAL UNIVERSITY</textPath></text>
    </g>
  </defs>
  <use href="#logoG"/>
  <text font-family="Liberation Serif" font-style="italic" font-weight="bold" font-size="15" fill="#111" letter-spacing="4"><textPath href="#arcT" startOffset="50%" text-anchor="middle">長春師範大學</textPath></text>
  <g clip-path="url(#slabclip)">
    <g opacity="0.32" transform="translate(0,298) scale(1,-1)"><use href="#logoG"/></g>
    <rect x="0" y="149" width="150" height="62" fill="url(#refl)"/>
  </g>
</svg>
<div class="t" style="left:636px;top:716px;font-size:27px;font-weight:bold;color:#2d7bb8;-webkit-text-stroke:0.5px #2d7bb8">长春师范大学 张德利</div>
<div class="t" style="left:618px;top:748px;font-size:29px;font-weight:bold;color:#2d7bb8">zhangdl64@126.com</div>
<div class="a" style="left:215px;top:801px;width:919px;height:33px;background:#2b7bb5"></div>
<div class="a" style="left:604px;top:807px;width:22px;height:22px;border-radius:50%;border:2px solid #e8eef5"></div>
<div class="a" style="left:609px;top:812px;width:12px;height:12px;border-radius:50%;border:1.5px solid #e8eef5"></div>
<div class="t" style="left:628px;top:806px;font-size:19px;font-weight:bold;font-style:italic;color:#f4f6f8;font-family:'Liberation Serif',serif;letter-spacing:0px">長春師範大學</div>
<!-- cursor -->
<svg style="left:715px;top:432px" width="12" height="19"><path d="M1 1V16L4.5 12.5L7 18L9 17L6.5 11.5H11Z" fill="#fff" stroke="#111" stroke-width="1.1" stroke-linejoin="round"/></svg>
<!-- scrollbars -->
<svg style="left:1149px;top:276px" width="7" height="6"><path d="M3.5 0L7 6H0Z" fill="#666"/></svg>
<div class="a" style="left:1148px;top:290px;width:7px;height:36px;background:#cdd2d7;border-radius:4px"></div>
<svg style="left:1149px;top:817px" width="7" height="6"><path d="M3.5 6L7 0H0Z" fill="#666"/></svg>
<svg style="left:1149px;top:829px" width="7" height="22"><path d="M0.5 5L3.5 1L6.5 5M3.5 2V8M0.5 8H6.5 M0.5 13H6.5M0.5 17L3.5 21L6.5 17M0.5 14L3.5 18L6.5 14" fill="none" stroke="#666" stroke-width="1"/></svg>
<svg style="left:213px;top:849px" width="5" height="7"><path d="M5 0V7L0 3.5Z" fill="#666"/></svg>
<div class="a" style="left:226px;top:848px;width:851px;height:7px;background:#cbd0d5;border-radius:4px"></div>
<svg style="left:1132px;top:849px" width="5" height="7"><path d="M0 0V7L5 3.5Z" fill="#666"/></svg>
<!-- notes -->
<div class="a" style="left:205px;top:859px;width:955px;height:1px;background:#d8dde2"></div>
<div class="t" style="left:210px;top:864px;font-size:12px;color:#8a8a8a">单击此处添加备注</div>
<div class="a" style="left:309px;top:861px;width:73px;height:20px;background:#f2f5f7;border:1px solid #dde2e6;border-radius:3px"></div>
<svg style="left:314px;top:865px" width="13" height="13"><path d="M8 11H1V1H12V6 M3 4H9M3 7H6" fill="none" stroke="#666" stroke-width="1.1"/><path d="M10 8L10.8 10L12.5 10.8L10.8 11.5L10 13L9.2 11.5L7.5 10.8L9.2 10Z" fill="#8a5cf0"/></svg>
<div class="t" style="left:330px;top:864px;font-size:12px;color:#444">AI 演讲稿</div>
<!-- status bar -->
<div class="a" style="left:0;top:885px;width:1209px;height:1px;background:#d8dde2"></div>
<div class="t" style="left:11px;top:891px;font-size:12px;color:#555">幻灯片 1 / 34</div>
<div class="a" style="left:84px;top:890px;width:1px;height:12px;background:#cfd4d9"></div>
<div class="t" style="left:97px;top:891px;font-size:12px;color:#555">⛉ Office 主题</div>
<div class="a" style="left:181px;top:890px;width:1px;height:12px;background:#cfd4d9"></div>
<div class="t" style="left:195px;top:891px;font-size:12px;color:#555">☑ 校对</div>
<div class="a" style="left:246px;top:890px;width:1px;height:12px;background:#cfd4d9"></div>
<div class="a" style="left:260px;top:893px;width:0;height:0;border-left:5px solid transparent;border-right:5px solid transparent;border-bottom:9px solid #f2a818"></div>
<div class="t" style="left:276px;top:891px;font-size:12px;color:#555">缺失字体</div>
<div class="t" style="left:593px;top:891px;font-size:12px;color:#555">⌂ 智能美化 ˅</div>
<div class="t" style="left:690px;top:891px;font-size:12px;color:#555">☰ 备注 ˅</div>
<div class="t" style="left:756px;top:891px;font-size:12px;color:#555">☐ 批注</div>
<div class="a" style="left:816px;top:888px;width:20px;height:14px;background:#d4d9de;border-radius:2px"></div>
<div class="a" style="left:821px;top:893px;width:10px;height:9px;border:1.2px solid #555"></div>
<div class="a" style="left:847px;top:893px;width:4px;height:4px;border:1px solid #555"></div>
<div class="a" style="left:854px;top:893px;width:4px;height:4px;border:1px solid #555"></div>
<div class="a" style="left:877px;top:893px;width:11px;height:9px;border:1.2px solid #555"></div>
<div class="a" style="left:908px;top:891px;width:18px;height:12px;background:#f0691f;border-radius:2px"></div>
<svg style="left:914px;top:894px" width="6" height="7"><path d="M0 0L6 3.5L0 7Z" fill="#fff"/></svg>
<div class="t" style="left:932px;top:891px;font-size:10px;color:#555">˅</div>
<div class="a" style="left:965px;top:893px;width:11px;height:9px;border:1.2px solid #555;border-radius:2px"></div>
<div class="t" style="left:997px;top:892px;font-size:12px;color:#555">81%</div>
<div class="t" style="left:1032px;top:891px;font-size:10px;color:#555">˅</div>
<div class="a" style="left:1054px;top:897px;width:9px;height:1.5px;background:#555"></div>
<div class="a" style="left:1075px;top:897px;width:37px;height:2px;background:#3b6cf0"></div>
<div class="a" style="left:1112px;top:897px;width:56px;height:1px;background:#bbb"></div>
<div class="a" style="left:1109px;top:893px;width:8px;height:8px;border-radius:50%;background:#fff;border:1px solid #aaa"></div>
<svg style="left:1183px;top:892px" width="10" height="10"><path d="M5 0V10M0 5H10" stroke="#555" stroke-width="1.4"/></svg>
<!-- right toolbar -->
<div class="a" style="left:1160px;top:271px;width:1px;height:614px;background:#d8dde2"></div>
<div class="a" style="left:1178px;top:292px;width:12px;height:1.5px;background:#777"></div>
<svg style="left:1176px;top:312px" width="16" height="340"><g fill="none" stroke="#333" stroke-width="1.1">
<path d="M1 4H15M1 11H15"/><circle cx="5" cy="4" r="2" fill="#e4e9ed"/><circle cx="11" cy="11" r="2" fill="#e4e9ed"/>
<path d="M8 37L10 42H15L11 45L12.5 50L8 47L3.5 50L5 45L1 42H6Z"/>
<path d="M1 73H9V80H1Z M5 80V84H14V76H9 M11 82l-2-2 2-2"/>
<path d="M3 106L13 116 M5 114L13 106 M1 108l2-2 2 2-2 2z M11 114l2-2 2 2-2 2z"/>
<path d="M1 143l4-3h6l4 3-2 3-2-1v7H5v-7l-2 1z"/>
<path d="M1 179V188H10 M1 179l4-3h6l4 3 M8 184l5 3"/>
<path d="M1 211V224L6 222L10 224L15 222V211L10 213L6 211L1 213Z"/><circle cx="11" cy="222" r="2.5"/>
<circle cx="8" cy="256" r="7"/><path d="M5.5 254a2.5 2.5 0 1 1 3.5 2.3v1.7M8 260v1"/>
<path d="M1 284H15V294H6L2 298V294H1Z"/>
</g><g fill="none" stroke="#555" stroke-width="1.1"><circle cx="3" cy="326" r="1.8"/><circle cx="8" cy="326" r="1.8"/><circle cx="13" cy="326" r="1.8"/></g></svg>
</div>
<!-- recording pill -->
<div class="a" style="left:20px;top:102px;width:219px;height:44px;background:rgba(72,72,72,0.44);border-radius:5px 5px 0 0"></div>
<svg style="left:32px;top:116px" width="24" height="18"><path d="M5 15C2 15 1 13 1 11.5C1 9.5 2.5 8 5 8C5.5 5 8 3 11 3C14 3 16.5 5.5 16.5 8.5C18 9 19 10 19 11.5C19 13.5 17.5 15 15 15Z" fill="#fff"/><circle cx="18.5" cy="14" r="4" fill="#7a3535" stroke="#3c3c3c" stroke-width="0.8"/></svg>
<div class="t" style="left:70px;top:117px;font-size:18px;color:#f5f5f5">录制中</div>
<div class="a" style="left:154px;top:115px;width:6px;height:18px;background:#e8e8e8;border-radius:3px"></div>
<div class="a" style="left:166px;top:115px;width:6px;height:18px;background:#e8e8e8;border-radius:3px"></div>
<div class="a" style="left:199px;top:115px;width:18px;height:18px;background:#e8e8e8;border-radius:3px"></div>
<!-- lock overlay -->
<svg style="left:41px;top:165px" width="17" height="17"><path d="M6 1H11L16 16H1Z" fill="rgba(205,207,208,0.9)"/></svg>
<div class="t" style="left:64px;top:168px;font-size:18px;color:#fff;text-shadow:0 0 1px rgba(120,120,120,0.35)">锁定画面</div>
<!-- collapse handle -->
<div class="a" style="left:1185px;top:494px;width:24px;height:60px;background:rgba(50,50,50,0.75);border-radius:5px 0 0 5px"></div>
<svg style="left:1193px;top:515px" width="9" height="17"><path d="M1 1L8 8.5L1 16" fill="none" stroke="#aaa" stroke-width="1.5"/></svg>
<div class="a" style="left:1212px;top:507px;width:2px;height:36px;background:#9a9a9a"></div>
<div class="a" style="left:1216px;top:507px;width:2px;height:36px;background:#9a9a9a"></div>
<!-- bottom bar -->
<div class="a" style="left:0;top:901px;width:1481px;height:95px;background:#282828"></div>
<!-- video tiles -->
<div class="a" style="left:1221px;top:155px;width:246px;height:138px;border:2px solid #545454;border-radius:5px;background:#2f2f2f;overflow:hidden">
  <svg style="left:4px;top:1px" width="234" height="132" viewBox="0 0 234 132">
    <defs><filter id="bl1"><feGaussianBlur stdDeviation="0.8"/></filter></defs>
    <g filter="url(#bl1)">
    <rect width="234" height="132" fill="#d9dde0"/>
    <rect x="0" y="0" width="100" height="80" fill="#e6e9ec"/>
    <path d="M0 0H100V8H0Z" fill="#edeff1"/>
    <path d="M13 13L22 7L27 11L32 6L38 10L45 6L52 5L60 6L70 4L82 5L98 4L98 7L60 10L40 12L13 14Z" fill="#d84a5e"/>
    <rect x="49" y="0" width="26" height="9" fill="#e8b870"/>
    <rect x="52" y="1" width="9" height="7" fill="#f0e0d0"/><rect x="65" y="1" width="8" height="7" fill="#f0e0d0"/>
    <path d="M36 16h10v3h-10zM50 16h10v3h-10zM64 16h10v3h-10zM78 16h10v3h-10z" fill="#d85060"/>
    <path d="M52 21h30v2h-30z" fill="#d87080"/>
    <rect x="90" y="0" width="10" height="50" fill="#d4d8dc"/>
    <rect x="99" y="7" width="17" height="30" fill="#f2f3f4"/>
    <rect x="116" y="0" width="13" height="38" fill="#5a8ea8"/>
    <rect x="129" y="0" width="28" height="40" fill="#f0f3f4"/>
    <rect x="141" y="0" width="2" height="40" fill="#c8d0d4"/>
    <rect x="157" y="0" width="28" height="58" fill="#5b90aa"/>
    <path d="M160 0v58M166 0v58M172 0v58M178 0v58" stroke="#4a7e98" stroke-width="1.5"/>
    <rect x="185" y="0" width="8" height="62" fill="#c4c8ca"/>
    <rect x="193" y="0" width="38" height="78" fill="#5a90aa"/>
    <path d="M198 0v78M205 0v78M212 0v78M219 0v78M226 0v78" stroke="#4a7e98" stroke-width="1.5"/>
    <rect x="230" y="0" width="4" height="80" fill="#e8eef0"/>
    <path d="M112 36L234 76V132H150Z" fill="#8c9094"/>
    <path d="M130 44L234 82V92L128 50Z" fill="#a8acae"/>
    <path d="M48 55L105 47L218 132H112Z" fill="#b89680"/>
    <path d="M62 52L72 51L128 100L112 103Z" fill="#e6e4e2"/>
    <path d="M112 103L128 100L152 132H128Z" fill="#d8d6d4"/>
    <path d="M0 62H20L30 132H0Z" fill="#2c2628"/>
    <ellipse cx="22" cy="78" rx="14" ry="16" fill="#1e1e22"/>
    <ellipse cx="40" cy="82" rx="14" ry="20" fill="#6a3a3a"/>
    <ellipse cx="42" cy="56" rx="9" ry="10" fill="#232026"/>
    <ellipse cx="58" cy="98" rx="15" ry="18" fill="#1c1c20"/>
    <ellipse cx="59" cy="76" rx="6" ry="7" fill="#c8aa92"/>
    <ellipse cx="58" cy="70" rx="6" ry="4" fill="#202024"/>
    <ellipse cx="112" cy="52" rx="12" ry="14" fill="#1e1e22"/>
    <ellipse cx="109" cy="40" rx="6" ry="7" fill="#c4a48c"/>
    <ellipse cx="160" cy="76" rx="22" ry="22" fill="#1a1a1e"/>
    <ellipse cx="155" cy="58" rx="7" ry="8" fill="#d0b098"/>
    <ellipse cx="196" cy="92" rx="22" ry="30" fill="#1e2032"/>
    <ellipse cx="186" cy="76" rx="7" ry="8" fill="#c8a890"/>
    <ellipse cx="216" cy="88" rx="14" ry="30" fill="#20203a"/>
    <rect x="0" y="100" width="234" height="32" fill="#6a6462" opacity="0.35"/>
    <rect x="112" y="84" width="20" height="8" fill="#2a2a30" transform="rotate(25 122 88)"/>
    </g>
  </svg>
  <div class="a" style="left:2px;top:97px;width:184px;height:37px;background:rgba(28,28,28,0.66)"></div>
  <svg style="left:10px;top:105px" width="16" height="21"><rect x="5" y="1" width="6" height="12" rx="3" fill="#fff"/><path d="M5 7H11V10C11 12 9.5 13 8 13C6.5 13 5 12 5 10Z" fill="#2bc24a"/><path d="M2 9C2 13 4.5 15.5 8 15.5C11.5 15.5 14 13 14 9 M8 15.5V20" fill="none" stroke="#fff" stroke-width="1.6"/></svg>
  <div class="t" style="left:35px;top:107px;font-size:18px;color:#fff">李令强<span style="color:#0a78ff">@腾讯会议</span></div>
</div>

<div class="a" style="left:1221px;top:305px;width:246px;height:138px;border:2px solid #22b84a;border-radius:5px;background:#2f2f2f;overflow:hidden">
  <svg style="left:4px;top:1px" width="234" height="132" viewBox="0 0 234 132">
    <defs><filter id="bl2"><feGaussianBlur stdDeviation="1.2"/></filter>
    <linearGradient id="win" x1="0" y1="0" x2="0" y2="1"><stop offset="0" stop-color="#eaeef0"/><stop offset="0.25" stop-color="#c8d4c0"/><stop offset="0.55" stop-color="#a8b898"/><stop offset="0.75" stop-color="#c8ceb8"/><stop offset="1" stop-color="#d8d2c6"/></linearGradient>
    <radialGradient id="face" cx="0.5" cy="0.45" r="0.6"><stop offset="0" stop-color="#b8ada4"/><stop offset="0.7" stop-color="#aa9c92"/><stop offset="1" stop-color="#8e8078"/></radialGradient></defs>
    <g filter="url(#bl2)">
    <rect width="234" height="132" fill="#e4e2df"/>
    <rect x="0" y="0" width="94" height="132" fill="url(#win)"/>
    <ellipse cx="75" cy="30" rx="22" ry="30" fill="#9ab486"/>
    <ellipse cx="30" cy="40" rx="30" ry="22" fill="#b4c4a4"/>
    <ellipse cx="55" cy="50" rx="20" ry="14" fill="#a4b890"/>
    <rect x="0" y="8" width="94" height="2" fill="#e0e4e4"/>
    <rect x="31" y="0" width="3" height="80" fill="#e0e2e0"/>
    <path d="M0 56H94M5 56V82M15 56V82M25 56V82M35 56V82M45 56V82M55 56V82M65 56V82M75 56V82M85 56V82" stroke="#d8dcd0" stroke-width="1.2"/>
    <rect x="0" y="82" width="94" height="50" fill="#d8d0c4"/>
    <ellipse cx="37" cy="96" rx="20" ry="14" fill="#d8bc98"/>
    <rect x="64" y="86" width="14" height="12" fill="#b89070"/>
    <rect x="94" y="0" width="4" height="132" fill="#ecebe8"/>
    <rect x="157" y="33" width="11" height="29" fill="#4a8a84"/>
    <rect x="170" y="31" width="18" height="31" fill="#98b08a"/>
    <rect x="170" y="48" width="18" height="8" fill="#c8b060"/>
    <rect x="176" y="70" width="18" height="14" fill="#e0b040"/>
    <rect x="178" y="78" width="20" height="18" fill="#a8a4a0"/>
    <path d="M199 56L203 86H195Z" fill="#3a7a3a"/><path d="M196 60L199 86H193Z" fill="#4a8a48"/>
    <rect x="194" y="86" width="11" height="16" fill="#f4f2ee"/>
    <rect x="160" y="100" width="74" height="32" fill="#d8d4ce"/>
    <ellipse cx="131" cy="78" rx="40" ry="48" fill="#7c808a"/>
    <ellipse cx="132" cy="100" rx="39" ry="56" fill="url(#face)"/>
    <path d="M106 73L126 72M140 72L160 73" stroke="#7a6e68" stroke-width="3" fill="none"/>
    <path d="M110 82L124 81M143 81L157 82" stroke="#4a3e3a" stroke-width="2.2" fill="none"/>
    <path d="M132 88L130 108" stroke="#9a8c84" stroke-width="2" fill="none"/><ellipse cx="133" cy="110" rx="7" ry="4" fill="#8a7a72"/>
    </g>
  </svg>
  <div class="a" style="left:2px;top:97px;width:184px;height:37px;background:rgba(28,28,28,0.66)"></div>
  <svg style="left:10px;top:105px" width="16" height="21"><rect x="5" y="1" width="6" height="12" rx="3" fill="#fff"/><path d="M5 7H11V10C11 12 9.5 13 8 13C6.5 13 5 12 5 10Z" fill="#2bc24a"/><path d="M2 9C2 13 4.5 15.5 8 15.5C11.5 15.5 14 13 14 9 M8 15.5V20" fill="none" stroke="#fff" stroke-width="1.6"/></svg>
  <div class="t" style="left:35px;top:107px;font-size:18px;color:#fff">张德利<span style="color:#0a78ff">@腾讯会议</span></div>
</div>

<div class="a" style="left:1221px;top:455px;width:246px;height:138px;border:1.5px solid #555;border-radius:5px;background:#333"></div>
<div class="a" style="left:1307px;top:476px;width:75px;height:75px;border-radius:12px;overflow:hidden"><svg style="left:0;top:0" width="75" height="75"><use href="#boyAv"/></svg></div>
<div class="a" style="left:1226px;top:554px;width:39px;height:36px;background:#e6852e"></div>
<svg style="left:1234px;top:561px" width="23" height="21"><ellipse cx="11.5" cy="7" rx="5.5" ry="6.5" fill="#fff"/><path d="M0 21C0 16 4 14 8 13.5L11.5 16L15 13.5C19 14 23 16 23 21Z" fill="#fff"/></svg>
<div class="a" style="left:1265px;top:554px;width:96px;height:36px;background:#2a2a2a"></div>
<svg style="left:1274px;top:561px" width="18" height="20"><rect x="6" y="1" width="6" height="11" rx="3" fill="#fff"/><path d="M3 8C3 12 5.5 14 9 14C12.5 14 15 12 15 8 M9 14V19" fill="none" stroke="#fff" stroke-width="1.6"/><path d="M1 17L16 3" stroke="#e5504a" stroke-width="1.8"/></svg>
<div class="t" style="left:1300px;top:565px;font-size:18px;color:#fff">张宗瑞</div>

<div class="a" style="left:1221px;top:605px;width:246px;height:138px;border:1.5px solid #555;border-radius:5px;background:#333"></div>
<div class="a" style="left:1307px;top:626px;width:75px;height:75px;border-radius:50%;background:#0a6cff"></div>
<div class="t" style="left:1315px;top:648px;font-size:28px;color:#fff">佳涵</div>
<div class="a" style="left:1224px;top:704px;width:186px;height:36px;background:#2a2a2a"></div>
<svg style="left:1231px;top:712px" width="18" height="20"><rect x="6" y="1" width="6" height="11" rx="3" fill="#fff"/><path d="M3 8C3 12 5.5 14 9 14C12.5 14 15 12 15 8 M9 14V19" fill="none" stroke="#fff" stroke-width="1.6"/><path d="M1 17L16 3" stroke="#e5504a" stroke-width="1.8"/></svg>
<div class="t" style="left:1258px;top:714px;font-size:18px;color:#fff">王佳涵<span style="color:#0a78ff">@腾讯会议</span></div>

<div class="a" style="left:1221px;top:755px;width:246px;height:138px;border:1.5px solid #555;border-radius:5px;background:#333"></div>
<div class="a" style="left:1307px;top:776px;width:75px;height:75px;border-radius:12px;overflow:hidden"><svg style="left:0;top:0" width="75" height="75"><use href="#girlAv"/></svg></div>
<div class="a" style="left:1224px;top:854px;width:186px;height:36px;background:#2a2a2a"></div>
<svg style="left:1231px;top:862px" width="18" height="20"><rect x="6" y="1" width="6" height="11" rx="3" fill="#fff"/><path d="M3 8C3 12 5.5 14 9 14C12.5 14 15 12 15 8 M9 14V19" fill="none" stroke="#fff" stroke-width="1.6"/><path d="M1 17L16 3" stroke="#e5504a" stroke-width="1.8"/></svg>
<div class="t" style="left:1258px;top:864px;font-size:18px;color:#fff">刘昱含<span style="color:#0a78ff">@腾讯会议</span></div>
<!-- toolbar icons -->
<div class="a" style="left:18px;top:57px;width:24px;height:24px;border-radius:50%;background:#a9a9a9"></div>
<div class="a" style="left:28.5px;top:62px;width:3px;height:3px;border-radius:50%;background:#3a3a3a"></div>
<div class="a" style="left:28.5px;top:67px;width:3px;height:9px;border-radius:1.5px;background:#3a3a3a"></div>
<svg style="left:61px;top:56px" width="22" height="26"><path d="M11 1L21 4V15C21 19 16 23 11 25C6 23 1 19 1 15V4Z" fill="#2b7cf0"/><path d="M11 8V18M6 13H16" stroke="#1f2f45" stroke-width="2.2"/></svg>
<div class="a" style="left:103px;top:69px;width:4px;height:7px;border-radius:2px;background:#22c03c"></div>
<div class="a" style="left:110.5px;top:63px;width:4px;height:13px;border-radius:2px;background:#22c03c"></div>
<div class="a" style="left:118px;top:56px;width:4px;height:20px;border-radius:2px;background:#22c03c"></div>
<!-- presenter view icon -->
<svg style="left:1239px;top:60px" width="19" height="18"><path d="M0 0H8V9H19V18H0Z M10 0H19V7H10Z" fill="#b4b4b4"/></svg>
<svg style="left:1362px;top:66px" width="8" height="5"><path d="M0 0H8L4 5Z" fill="#b0b0b0"/></svg>
<svg style="left:1396px;top:58px" width="22" height="21"><path d="M1 7V1H7 M15 1H21V7 M21 14V20H15 M7 20H1V14" fill="none" stroke="#b4b4b4" stroke-width="2.4"/></svg>
<svg style="left:1444px;top:58px" width="23" height="21"><rect x="1.2" y="1.2" width="13" height="18.6" fill="none" stroke="#b4b4b4" stroke-width="2.4"/><rect x="19" y="0" width="3.5" height="21" fill="#b4b4b4"/></svg>

<!-- right panel header -->
<svg style="left:1489px;top:57px" width="28" height="21"><path d="M1 20C1 15 5 13 8 12C6 10.5 5 8.5 5 6C5 2.5 7 0 10 0C13 0 15 2.5 15 6C15 8.5 14 10.5 12 12C15 13 19 15 19 20Z" fill="#fff"/><path d="M17 20C17 17 15 14.5 14.5 13.8C16 12.5 16.5 10.5 16.5 8.5C16.5 6 18 4 20 4C22 4 23.5 6 23.5 8.5C23.5 10.5 22.5 12 21.5 13C23.5 14 26 16 26 20Z" fill="#fff" stroke="#2b2b2b" stroke-width="1.2"/></svg>
<div class="t" style="left:1518px;top:59px;font-size:18px;color:#fff">管理成员(5)</div>
<svg style="left:1833px;top:60px" width="18" height="16"><path d="M8 15H3C1.5 15 1 14 1 13V3C1 2 1.5 1 3 1H14C15.5 1 16 2 16 3V6" fill="none" stroke="#9a9a9a" stroke-width="1.4"/><path d="M10 8.5H17M10 11H17M10 13.5H17" stroke="#9a9a9a" stroke-width="1.3"/></svg>
<svg style="left:1857px;top:61px" width="15" height="14"><path d="M1 0.5L14 13.5M14 0.5L1 13.5" stroke="#a0a0a0" stroke-width="1.6"/></svg>
<div class="a" style="left:1877px;top:44px;width:1px;height:45px;background:#3a3a3a"></div>
<div class="a" style="left:1877px;top:88px;width:42px;height:1px;background:#3a3a3a"></div>
<svg style="left:1893px;top:61px" width="14" height="14"><path d="M0 1H14M0 7H14M0 13H14" stroke="#a0a0a0" stroke-width="1.5"/></svg>
<!-- title window controls -->
<div class="a" style="left:1763px;top:18px;width:15px;height:1.5px;background:#c8c8c8"></div>
<svg style="left:1822px;top:9px" width="17" height="18"><path d="M4 5V1H16V13H12" fill="none" stroke="#c8c8c8" stroke-width="1.5"/><rect x="1" y="5" width="11" height="12" rx="1" fill="none" stroke="#c8c8c8" stroke-width="1.5"/></svg>
<svg style="left:1882px;top:11px" width="16" height="16"><path d="M1 1L15 15M15 1L1 15" stroke="#d0d0d0" stroke-width="1.6"/></svg>
<svg style="left:1063px;top:6px" width="17" height="16"><path d="M1 1H16M1 7H16M1 13H10" stroke="#eee" stroke-width="1.6"/><path d="M11 11H17L14 15Z" fill="#eee"/></svg>

<!-- search -->
<div class="a" style="left:1500px;top:104px;width:402px;height:48px;background:#3d3d3d;border-radius:5px"></div>
<svg style="left:1514px;top:116px" width="23" height="23"><circle cx="9" cy="9" r="7.5" fill="none" stroke="#8c8c8c" stroke-width="1.6"/><path d="M14.5 14.5L21 21" stroke="#8c8c8c" stroke-width="1.8"/></svg>
<div class="t" style="left:1543px;top:119px;font-size:18px;color:#8a8a8a">搜索成员</div>
<!-- tabs -->
<div class="a" style="left:1500px;top:165px;width:402px;height:39px;background:#3d3d3d;border-radius:5px"></div>
<div class="a" style="left:1503px;top:168px;width:200px;height:33px;background:#5e5e5e;border-radius:4px"></div>
<div class="t" style="left:1569px;top:177px;font-size:18px;color:#fff">会议中·5</div>
<div class="t" style="left:1775px;top:177px;font-size:18px;color:#aaa">未进入</div>
<!-- scrollbar -->
<div class="a" style="left:1907px;top:164px;width:11px;height:74px;background:#222;border-radius:6px"></div>
<div class="a" style="left:1909px;top:166px;width:7px;height:70px;background:#5a5a5a;border-radius:4px"></div>
<div class="a" style="left:1909px;top:204px;width:7px;height:32px;background:linear-gradient(#6ab8ff,#2a78f0);border-radius:3px 3px 4px 4px"></div>

<!-- participants -->
<div class="a" style="left:1509px;top:233px;width:45px;height:45px;border-radius:5px;overflow:hidden"><svg style="left:0;top:0" width="45" height="45" viewBox="0 0 75 75"><use href="#boyAv"/></svg></div>
<div class="t" style="left:1568px;top:233px;font-size:18px;color:#fff">张宗瑞</div>
<div class="t" style="left:1568px;top:259px;font-size:18px;color:#8c8c8c">(主持人, 我)</div>
<svg style="left:1791px;top:246px" width="30" height="20"><path d="M6 17C3 17 1 15 1 12.5C1 10 3 8 6 8C6.5 4.5 9.5 2 13 2C17 2 20 5 20 9C22.5 9.5 24 11.5 24 13.5C24 15.5 22 17 20 17Z" fill="#8c8c8c"/><circle cx="23.5" cy="14" r="5" fill="#f0504a" stroke="#2b2b2b" stroke-width="1"/></svg>
<svg style="left:1836px;top:243px" width="24" height="24"><rect x="8" y="1" width="8" height="14" rx="4" fill="#8c8c8c"/><path d="M5 11C5 15 8 18 12 18C16 18 19 15 19 11 M12 18V23" fill="none" stroke="#8c8c8c" stroke-width="1.8"/><path d="M2 22L22 2" stroke="#e5504a" stroke-width="2"/></svg>
<svg style="left:1877px;top:243px" width="27" height="24"><rect x="1" y="6" width="17" height="14" rx="1.5" fill="#8c8c8c"/><path d="M18 10L25 6V20L18 16Z" fill="#8c8c8c"/><path d="M2 23L23 1" stroke="#e5504a" stroke-width="2"/></svg>

<div class="a" style="left:1509px;top:299px;width:45px;height:45px;border-radius:5px;overflow:hidden"><svg style="left:0;top:0" width="45" height="45"><use href="#lilyAv"/></svg></div>
<div class="t" style="left:1568px;top:312px;font-size:18px;color:#fff">张德利<span style="color:#0a78ff">@腾讯会议</span></div>
<svg style="left:1794px;top:310px" width="24" height="22"><rect x="1" y="1" width="22" height="15" rx="2" fill="#8c8c8c"/><path d="M6 12C7 8 10 6 15 6 M12 3.5L15.5 6L12 8.5" fill="none" stroke="#2b2b2b" stroke-width="1.8"/><rect x="7" y="18.5" width="10" height="2.5" rx="1" fill="#8c8c8c"/></svg>
<svg style="left:1837px;top:309px" width="22" height="25"><rect x="7" y="1" width="8" height="15" rx="4" fill="#8c8c8c"/><path d="M7 8H15V12C15 14 13.5 16 11 16C8.5 16 7 14 7 12Z" fill="#2bc24a"/><path d="M3 11C3 15.5 6.5 19 11 19C15.5 19 19 15.5 19 11 M11 19V24" fill="none" stroke="#8c8c8c" stroke-width="1.8"/></svg>
<svg style="left:1877px;top:312px" width="27" height="18"><rect x="1" y="1" width="17" height="15" rx="1.5" fill="#8c8c8c"/><path d="M18 5L25 1.5V15.5L18 12Z" fill="#8c8c8c"/></svg>

<svg style="left:1509px;top:365px" width="45" height="45" viewBox="0 0 45 45"><defs><clipPath id="av3"><rect width="45" height="45" rx="5"/></clipPath><filter id="bl3"><feGaussianBlur stdDeviation="0.6"/></filter></defs><g clip-path="url(#av3)" filter="url(#bl3)"><rect width="45" height="45" fill="#5e7a56"/>
<circle cx="6" cy="8" r="6" fill="#8aa67c"/><circle cx="22" cy="5" r="5" fill="#486a40"/><circle cx="36" cy="10" r="7" fill="#9ab68a"/><circle cx="12" cy="22" r="6" fill="#3e5a38"/><circle cx="28" cy="22" r="6" fill="#7e9a70"/><circle cx="42" cy="28" r="6" fill="#4a6a44"/><circle cx="5" cy="36" r="6" fill="#9ab088"/><circle cx="20" cy="38" r="7" fill="#54744c"/><circle cx="35" cy="40" r="6" fill="#86a278"/>
<path d="M0 30L45 12M10 45L30 0" stroke="#3a4a32" stroke-width="1.2"/></g></svg>
<div class="t" style="left:1568px;top:378px;font-size:18px;color:#fff">李令强<span style="color:#0a78ff">@腾讯会议</span></div>
<svg style="left:1837px;top:375px" width="22" height="25"><rect x="7" y="1" width="8" height="15" rx="4" fill="#8c8c8c"/><path d="M7 8H15V12C15 14 13.5 16 11 16C8.5 16 7 14 7 12Z" fill="#2bc24a"/><path d="M3 11C3 15.5 6.5 19 11 19C15.5 19 19 15.5 19 11 M11 19V24" fill="none" stroke="#8c8c8c" stroke-width="1.8"/></svg>
<svg style="left:1877px;top:378px" width="27" height="18"><rect x="1" y="1" width="17" height="15" rx="1.5" fill="#8c8c8c"/><path d="M18 5L25 1.5V15.5L18 12Z" fill="#8c8c8c"/></svg>

<div class="a" style="left:1509px;top:431px;width:45px;height:45px;border-radius:5px;overflow:hidden"><svg style="left:0;top:0" width="45" height="45" viewBox="0 0 75 75"><use href="#girlAv"/></svg></div>
<div class="t" style="left:1568px;top:444px;font-size:18px;color:#fff">刘昱含<span style="color:#0a78ff">@腾讯会议</span></div>
<svg style="left:1836px;top:441px" width="24" height="24"><rect x="8" y="1" width="8" height="14" rx="4" fill="#8c8c8c"/><path d="M5 11C5 15 8 18 12 18C16 18 19 15 19 11 M12 18V23" fill="none" stroke="#8c8c8c" stroke-width="1.8"/><path d="M2 22L22 2" stroke="#e5504a" stroke-width="2"/></svg>
<svg style="left:1877px;top:441px" width="27" height="24"><rect x="1" y="6" width="17" height="14" rx="1.5" fill="#8c8c8c"/><path d="M18 10L25 6V20L18 16Z" fill="#8c8c8c"/><path d="M2 23L23 1" stroke="#e5504a" stroke-width="2"/></svg>

<div class="a" style="left:1509px;top:497px;width:45px;height:45px;border-radius:5px;background:#0a6cff"></div>
<div class="t" style="left:1515px;top:512px;font-size:16px;color:#fff">佳涵</div>
<div class="t" style="left:1568px;top:510px;font-size:18px;color:#fff">王佳涵<span style="color:#0a78ff">@腾讯会议</span></div>
<svg style="left:1836px;top:507px" width="24" height="24"><rect x="8" y="1" width="8" height="14" rx="4" fill="#8c8c8c"/><path d="M5 11C5 15 8 18 12 18C16 18 19 15 19 11 M12 18V23" fill="none" stroke="#8c8c8c" stroke-width="1.8"/><path d="M2 22L22 2" stroke="#e5504a" stroke-width="2"/></svg>
<svg style="left:1877px;top:507px" width="27" height="24"><rect x="1" y="6" width="17" height="14" rx="1.5" fill="#8c8c8c"/><path d="M18 10L25 6V20L18 16Z" fill="#8c8c8c"/><path d="M2 23L23 1" stroke="#e5504a" stroke-width="2"/></svg>

<!-- speaking bar -->
<div class="a" style="left:1532px;top:563px;width:366px;height:54px;background:#363636"></div>
<svg style="left:1547px;top:579px" width="24" height="24"><rect x="8" y="1" width="8" height="14" rx="4" fill="#8c8c8c"/><path d="M5 11C5 15 8 18 12 18C16 18 19 15 19 11 M12 18V23" fill="none" stroke="#8c8c8c" stroke-width="1.8"/><path d="M2 22L22 2" stroke="#e5504a" stroke-width="2"/></svg>
<div class="a" style="left:1580px;top:575px;width:2px;height:31px;background:#1c1f24"></div>
<div class="t" style="left:1597px;top:582px;font-size:18px;color:#fff">正在讲话: 张德利; 李令强;</div>

<!-- floating usb button -->
<div class="a" style="left:1849px;top:706px;width:63px;height:63px;border-radius:50%;background:radial-gradient(circle at 50% 50%,#dfe6ff 0,#cfd9fb 60%,#b8c6f4 100%);box-shadow:0 2px 6px rgba(0,0,0,0.35)"></div>
<div class="a" style="left:1868px;top:722px;width:24px;height:35px;border-radius:4px 4px 10px 10px;background:linear-gradient(90deg,#5a88f8,#3a6af0)"></div>
<div class="a" style="left:1872px;top:721px;width:16px;height:9px;background:#e0e4ec;border-radius:2px 2px 0 0"></div>

<!-- bottom right buttons -->
<div class="a" style="left:1317px;top:925px;width:114px;height:54px;border:1.5px solid #e05050;border-radius:4px"></div>
<div class="t" style="left:1334px;top:942px;font-size:20.5px;color:#e85a54">结束会议</div>
<div class="a" style="left:1500px;top:929px;width:126px;height:48px;background:#494949;border-radius:4px"></div>
<div class="t" style="left:1527px;top:945px;font-size:18px;color:#fff">全体静音</div>
<div class="a" style="left:1638px;top:929px;width:126px;height:48px;background:#494949;border-radius:4px"></div>
<div class="t" style="left:1646px;top:945px;font-size:18px;color:#fff">解除全体静音</div>
<div class="a" style="left:1776px;top:929px;width:126px;height:48px;background:#494949;border-radius:4px"></div>
<div class="t" style="left:1814px;top:945px;font-size:18px;color:#fff">更多</div>
<svg style="left:1855px;top:950px" width="10" height="6"><path d="M0 0H10L5 6Z" fill="#fff"/></svg>

<!-- bottom toolbar -->
<svg style="left:48px;top:925px" width="32" height="33"><rect x="11" y="1" width="10" height="19" rx="5" fill="#fff"/><path d="M5 14C5 20 10 24 16 24C22 24 27 20 27 14 M16 24V31" fill="none" stroke="#fff" stroke-width="2.4"/><path d="M1.5 29L29 2.5" stroke="#e85a54" stroke-width="2.6"/></svg>
<svg style="left:108px;top:948px" width="12" height="8"><path d="M6 0L12 8H0Z" fill="#fff"/></svg>
<div class="t" style="left:32px;top:967px;font-size:16px;color:#f2f2f2">解除静音</div>
<svg style="left:149px;top:927px" width="38" height="31"><rect x="1" y="4" width="27" height="23" rx="1" fill="#fff"/><path d="M28 10L37 6V24L28 20Z" fill="#fff"/><path d="M4 30L32 2" stroke="#2a2a2a" stroke-width="5"/><path d="M4 30L32 2" stroke="#e85a54" stroke-width="2.6"/></svg>
<svg style="left:211px;top:948px" width="12" height="8"><path d="M6 0L12 8H0Z" fill="#fff"/></svg>
<div class="t" style="left:136px;top:967px;font-size:16px;color:#f2f2f2">开启视频</div>
<svg style="left:371px;top:928px" width="32" height="29"><rect x="0" y="0" width="32" height="22" rx="2" fill="#fff"/><path d="M8 16C10 10 14 7.5 20 7.5V4L26 9L20 14V11C15 11 11 13 8 16Z" fill="#2a2a2a"/><rect x="7" y="25" width="18" height="4" rx="1.5" fill="#fff"/></svg>
<svg style="left:430px;top:948px" width="11" height="8"><path d="M5.5 0L11 8H0Z" fill="#fff"/></svg>
<div class="t" style="left:371px;top:967px;font-size:16px;color:#f2f2f2">共享</div>
<svg style="left:469px;top:926px" width="28" height="32"><path d="M14 0L27 3V18C27 24 20 29 14 32C8 29 1 24 1 18V3Z" fill="#fff"/><path d="M7 15L12 20L21 11" fill="none" stroke="#2a2a2a" stroke-width="3"/></svg>
<div class="t" style="left:467px;top:967px;font-size:16px;color:#f2f2f2">安全</div>
<svg style="left:548px;top:927px" width="37" height="29"><path d="M0 28C0 22 5 19 10 18C8 16 6.5 13 6.5 9C6.5 4 9.5 0 14 0C18.5 0 21 4 21 9C21 12.5 20 15.5 18 17.5C19 18 19.5 18.5 20 19L14 28Z" fill="#fff"/><circle cx="27" cy="20" r="9" fill="#fff" stroke="#2a2a2a" stroke-width="2"/><path d="M27 15V25M22 20H32" stroke="#2a2a2a" stroke-width="2.6"/></svg>
<div class="t" style="left:533px;top:967px;font-size:16px;color:#f2f2f2">邀请参会</div>
<svg style="left:643px;top:927px" width="37" height="29"><path d="M0 28C0 22 5 19 10 18C8 16 6.5 13 6.5 9C6.5 4 9.5 0 14 0C18.5 0 21 4 21 9C21 13 19.5 16 17.5 18C23 19 28 22 28 28Z" fill="#fff"/><path d="M24 28C24 24 22 21 21 20C22.5 18 23 16 23 13C23 9.5 25 7 27.5 7C30 7 32 9.5 32 13C32 15.5 31 17.5 29.5 19C33 20 36 23 36 28Z" fill="#fff" stroke="#2a2a2a" stroke-width="1.6"/></svg>
<div class="t" style="left:619px;top:967px;font-size:16px;color:#f2f2f2">管理成员(5)</div>
<svg style="left:744px;top:927px" width="30" height="28"><path d="M0 0H30V22H8L1 28V22H0Z" fill="#fff"/><rect x="8" y="9" width="3.5" height="3.5" fill="#2a2a2a"/><rect x="13.5" y="9" width="3.5" height="3.5" fill="#2a2a2a"/><rect x="19" y="9" width="3.5" height="3.5" fill="#2a2a2a"/></svg>
<div class="t" style="left:726px;top:967px;font-size:16px;color:#f2f2f2">会中聊天</div>
<svg style="left:828px;top:925px" width="33" height="33"><circle cx="16.5" cy="16.5" r="15" fill="none" stroke="#fff" stroke-width="2.4"/><rect x="10" y="10" width="13" height="13" rx="2" fill="#fff"/></svg>
<svg style="left:887px;top:948px" width="12" height="8"><path d="M6 0L12 8H0Z" fill="#fff"/></svg>
<div class="t" style="left:812px;top:967px;font-size:16px;color:#f2f2f2">结束录制</div>
<svg style="left:931px;top:926px" width="31" height="32"><rect x="9" y="0" width="13" height="14" rx="1" fill="#fff"/><rect x="0" y="17" width="14" height="15" rx="1" fill="#fff"/><rect x="17" y="17" width="14" height="15" rx="1" fill="#fff"/></svg>
<div class="t" style="left:914px;top:967px;font-size:16px;color:#f2f2f2">分组讨论</div>
<svg style="left:1013px;top:925px" width="33" height="33"><path d="M8 1.5L15 8.5L8 15.5L1 8.5Z" fill="none" stroke="#fff" stroke-width="2.2"/><rect x="19" y="1" width="14" height="14" rx="1" fill="#fff"/><rect x="2" y="18" width="14" height="15" rx="1" fill="#fff"/><rect x="19" y="18" width="14" height="15" rx="1" fill="#fff"/></svg>
<div class="t" style="left:1014px;top:967px;font-size:16px;color:#f2f2f2">应用</div>
<svg style="left:1094px;top:925px" width="32" height="33"><path d="M16 0L30 8V25L16 33L2 25V8Z" fill="#fff"/><circle cx="16" cy="16.5" r="6.5" fill="none" stroke="#2a2a2a" stroke-width="3"/></svg>
<div class="t" style="left:1095px;top:967px;font-size:16px;color:#f2f2f2">设置</div>
</body></html>
